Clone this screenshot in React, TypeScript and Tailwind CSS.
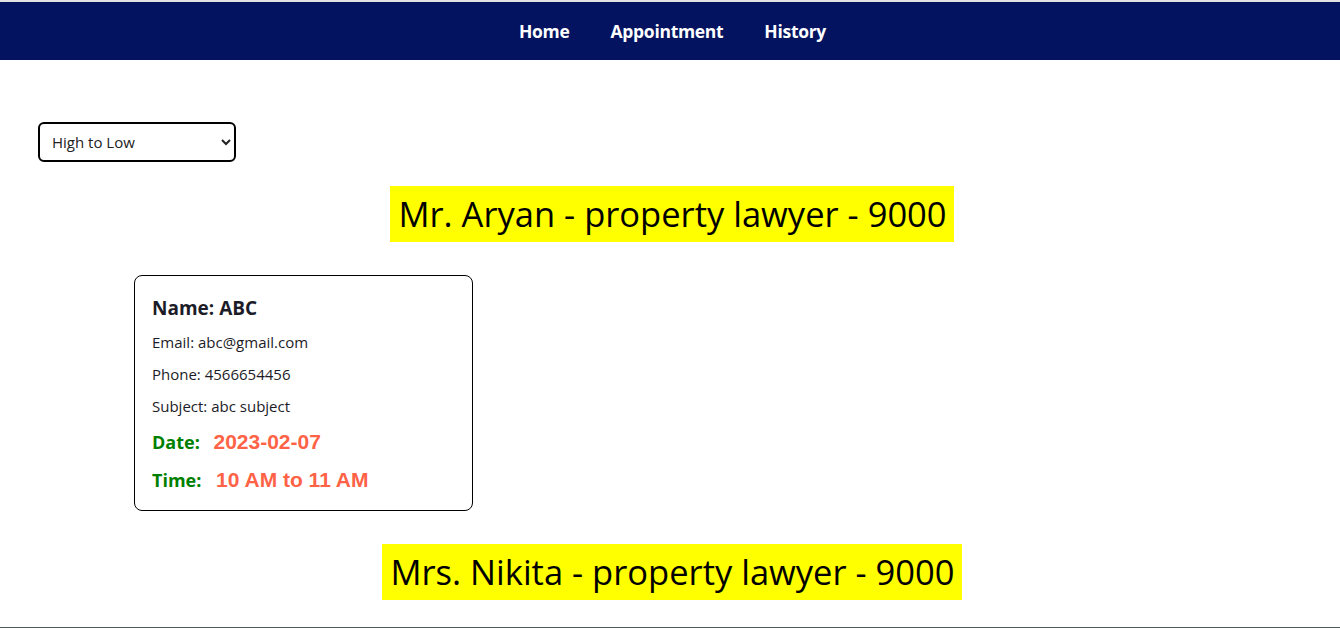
import { useState } from "react";

const lawyers = [
  {
    name: "Mr. Aryan",
    type: "property lawyer",
    fee: 9000,
    appointments: [
      {
        name: "ABC",
        email: "abc@gmail.com",
        phone: "4566654456",
        subject: "abc subject",
        date: "2023-02-07",
        time: "10 AM to 11 AM",
      },
    ],
  },
  { name: "Mrs. Nikita", type: "property lawyer", fee: 9000, appointments: [] },
];

export default function App() {
  const [sort, setSort] = useState("desc");

  return (
    <div className="h-[628px] overflow-hidden bg-white text-[#111] font-['Open_Sans',sans-serif] border-t-2 border-b border-t-[#e2e2e2] border-b-[#505a5a]">
      <nav className="h-[58px] bg-[#03135f] flex justify-center items-center gap-[41px] pl-[5px]">
        <a className="text-white font-bold text-[17.5px] tracking-[-0.3px]">Home</a>
        <a className="text-white font-bold text-[17.5px] tracking-[-0.3px]">Appointment</a>
        <a className="text-white font-bold text-[17.5px] tracking-[-0.3px]">History</a>
      </nav>

      <div className="pl-[38px] pt-[62px]">
        <select
          value={sort}
          onChange={(e) => setSort(e.target.value)}
          className="w-[198px] h-[40px] border-2 border-black rounded-[6px] pl-[8px] pr-[8px] text-[15px] text-[#222] bg-white"
        >
          <option value="desc">High to Low</option>
          <option value="asc">Low to High</option>
        </select>
      </div>

      {lawyers.map((l, i) => (
        <div key={i}>
          <div className="flex justify-center mt-[24px] pl-[4px]">
            <h1 className="bg-[#ffff00] pl-[8px] pr-[7px] h-[56px] leading-[56px] text-[34.5px] text-black">
              {l.name} - {l.type} - {l.fee}
            </h1>
          </div>
          {l.appointments.length > 0 && (
            <div className="pl-[10%] mt-[33px] mb-[33px]">
              {l.appointments.map((a, j) => (
                <div key={j} className="w-[339px] h-[236px] border border-black rounded-[8px] px-[17px] pt-[20px] text-[#1c1c28]">
                  <div className="font-bold text-[19px] leading-[24px]">Name: {a.name}</div>
                  <div className="text-[15px] mt-[12px] leading-[20px]">Email: {a.email}</div>
                  <div className="text-[15px] mt-[12px] leading-[20px]">Phone: {a.phone}</div>
                  <div className="text-[15px] mt-[12px] leading-[20px]">Subject: {a.subject}</div>
                  <div className="font-bold text-[18px] mt-[14px] leading-[24px]">
                    <span className="text-[#008000]">Date: </span>
                    <span className="text-[#ff6347] ml-[9px] font-['Liberation_Sans',sans-serif] text-[21px]">{a.date}</span>
                  </div>
                  <div className="font-bold text-[18px] mt-[14px] leading-[24px]">
                    <span className="text-[#008000]">Time: </span>
                    <span className="text-[#ff6347] ml-[10px] font-['Liberation_Sans',sans-serif] text-[21px]">{a.time}</span>
                  </div>
                </div>
              ))}
            </div>
          )}
        </div>
      ))}
    </div>
  );
}
